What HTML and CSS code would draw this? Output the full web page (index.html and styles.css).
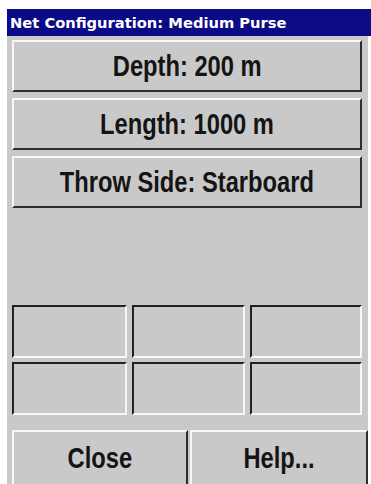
FILE: index.html
```html
<!DOCTYPE html>
<html>
<head>
<meta charset="utf-8">
<link rel="stylesheet" href="styles.css">
</head>
<body>
<div class="window">
  <div class="titlebar">Net Configuration: Medium Purse</div>
  <div class="panel">
    <div class="btn wide"><span class="label">Depth: 200 m</span></div>
    <div class="btn wide"><span class="label">Length: 1000 m</span></div>
    <div class="btn wide"><span class="label">Throw Side: Starboard</span></div>
    <div class="grid">
      <div class="cell"></div>
      <div class="cell"></div>
      <div class="cell"></div>
      <div class="cell"></div>
      <div class="cell"></div>
      <div class="cell"></div>
    </div>
    <div class="bottom">
      <div class="btn close"><span class="label">Close</span></div>
      <div class="btn help"><span class="label">Help...</span></div>
    </div>
  </div>
</div>
</body>
</html>
```

FILE: styles.css
```css
html, body {
  margin: 0;
  padding: 0;
  background: #ffffff;
  overflow: hidden;
}
body {
  width: 371px;
  height: 484px;
}
.window {
  margin: 9px 0 0 7px;
  width: 364px;
}
.titlebar {
  height: 27px;
  line-height: 27px;
  background: #0b0b86;
  color: #ffffff;
  font-family: "DejaVu Sans", sans-serif;
  font-weight: bold;
  font-size: 14.7px;
  padding-left: 3px;
  white-space: nowrap;
}
.panel {
  width: 361px;
  height: 470px;
  box-sizing: border-box;
  background: #c9c9c9;
  padding: 4px 0 0 5px;
  display: flex;
  flex-direction: column;
}
.btn {
  box-sizing: border-box;
  background: #c9c9c9;
  border-top: 2px solid #f6f6f6;
  border-left: 2px solid #f6f6f6;
  border-bottom: 2px solid #2e2e2e;
  border-right: 2px solid #2e2e2e;
  display: flex;
  align-items: center;
  justify-content: center;
  color: #141414;
  font-family: "Liberation Sans", Arial, sans-serif;
  font-weight: bold;
  font-size: 30px;
}
.label {
  display: inline-block;
  transform: scaleX(0.79);
  white-space: nowrap;
}
.wide {
  width: 350px;
  height: 52px;
  margin-bottom: 6px;
}
.grid {
  margin-top: 91px;
  width: 350px;
  display: grid;
  grid-template-columns: 115px 113px 112px;
  grid-template-rows: 53px 53px;
  column-gap: 5px;
  row-gap: 4px;
}
.cell {
  box-sizing: border-box;
  border-top: 2px solid #222222;
  border-left: 2px solid #222222;
  border-bottom: 2px solid #f6f6f6;
  border-right: 2px solid #f6f6f6;
}
.bottom {
  margin-top: 15px;
  display: flex;
  gap: 2px;
}
.close {
  width: 176px;
  height: 56px;
}
.help {
  width: 178px;
  height: 56px;
}
```
